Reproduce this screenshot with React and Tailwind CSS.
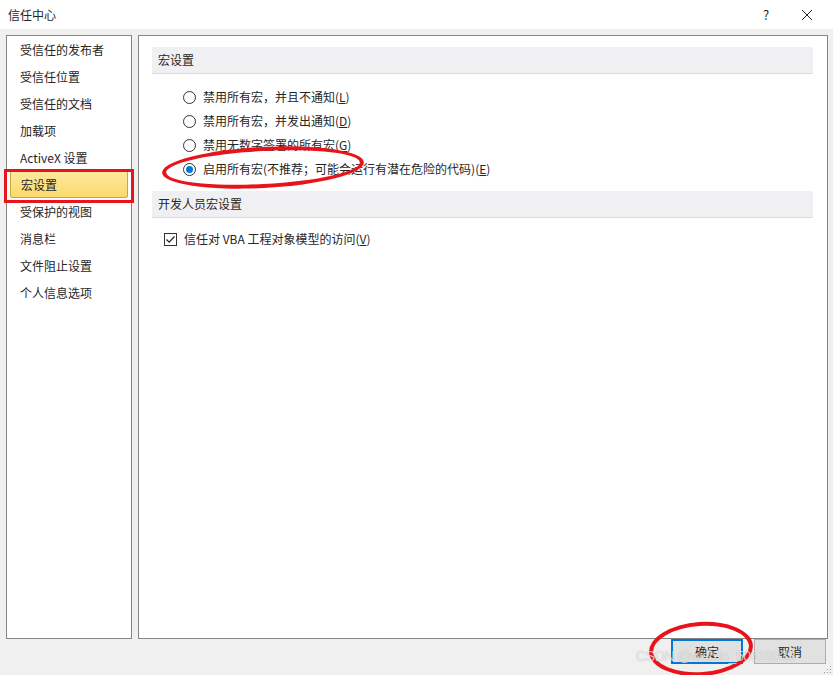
import { useState } from 'react'

const menu = [
  '受信任的发布者',
  '受信任位置',
  '受信任的文档',
  '加载项',
  'ActiveX 设置',
  '宏设置',
  '受保护的视图',
  '消息栏',
  '文件阻止设置',
  '个人信息选项',
]

const options = [
  { label: '禁用所有宏，并且不通知', key: 'L' },
  { label: '禁用所有宏，并发出通知', key: 'D' },
  { label: '禁用无数字签署的所有宏', key: 'G' },
  { label: '启用所有宏(不推荐；可能会运行有潜在危险的代码)', key: 'E' },
]

function Radio({ checked }) {
  return (
    <span className="w-[13px] h-[13px] rounded-full border border-[#333] bg-white flex items-center justify-center shrink-0">
      {checked && <span className="w-[7px] h-[7px] rounded-full bg-[#0078d7]" />}
    </span>
  )
}

function SectionHeader({ children }) {
  return (
    <div className="h-[27px] bg-[#f0f0f3] border-b border-[#dcdce0] flex items-center px-[6px] text-[12px] text-[#262626]">
      {children}
    </div>
  )
}

export default function App() {
  const [selected, setSelected] = useState(3)
  const [trustVba, setTrustVba] = useState(true)

  return (
    <div
      className="relative w-[833px] h-[675px] bg-[#f0f0f0] flex flex-col overflow-hidden text-[#262626]"
      style={{ fontFamily: '"Noto Sans CJK SC", "Noto Sans", sans-serif' }}
    >
      {/* title bar */}
      <div className="h-[29px] bg-white flex items-center pl-[8px] text-[12px]">
        <span>信任中心</span>
        <span className="ml-auto w-[30px] text-center text-[13px]">?</span>
        <span className="w-[52px] flex justify-center">
          <svg width="12" height="12" viewBox="0 0 12 12">
            <path d="M1 1 L11 11 M11 1 L1 11" stroke="#222" strokeWidth="1" />
          </svg>
        </span>
      </div>

      {/* body */}
      <div className="flex gap-[6px] pl-[6px] pt-[6px] h-[610px]">
        <div className="w-[126px] h-[604px] bg-white border border-[#858585]">
          {menu.map((m, i) => (
            <div key={m} className="h-[27px] px-[3px] flex items-center">
              <div
                className={`w-full h-[27px] flex items-center pl-[10px] text-[12px] ${
                  i === 5 ? 'bg-gradient-to-b from-[#fde99e] to-[#fbd96a] border border-[#c8a642] rounded-[2px]' : ''
                }`}
              >
                {m}
              </div>
            </div>
          ))}
        </div>

        <div className="w-[690px] h-[604px] bg-white border border-[#858585] pt-[11px] pl-[13px] pr-[14px]">
          <SectionHeader>宏设置</SectionHeader>
          <div className="pt-[11px] pl-[31px] flex flex-col">
            {options.map((o, i) => (
              <div
                key={o.key}
                onClick={() => setSelected(i)}
                className="h-[24px] flex items-center gap-[7px] text-[12px] cursor-pointer"
              >
                <Radio checked={selected === i} />
                <span>
                  {o.label}(<span className="underline">{o.key}</span>)
                </span>
              </div>
            ))}
          </div>
          <div className="mt-[10px]">
            <SectionHeader>开发人员宏设置</SectionHeader>
          </div>
          <div
            onClick={() => setTrustVba(!trustVba)}
            className="mt-[12px] pl-[12px] h-[18px] flex items-center gap-[7px] text-[12px] cursor-pointer"
          >
            <span className="w-[13px] h-[13px] border border-[#333] bg-white flex items-center justify-center">
              {trustVba && (
                <svg width="11" height="11" viewBox="0 0 11 11">
                  <path d="M1.5 5.5 L4.2 8.2 L9.5 2.5" stroke="#222" strokeWidth="1.2" fill="none" />
                </svg>
              )}
            </span>
            <span>
              信任对 VBA 工程对象模型的访问(<span className="underline">V</span>)
            </span>
          </div>
        </div>
      </div>

      {/* footer */}
      <div className="flex justify-end gap-[11px] pr-[7px]">
        <button className="w-[72px] h-[25px] bg-[#e1e1e1] border-2 border-[#0078d7] text-[12px]">确定</button>
        <button className="w-[72px] h-[25px] bg-[#e1e1e1] border border-[#adadad] text-[12px]">取消</button>
      </div>

      {/* resize grip */}
      <svg className="absolute right-[1px] bottom-[1px]" width="10" height="10" viewBox="0 0 10 10">
        <rect x="8" y="2" width="1" height="1" fill="#999" />
        <rect x="5" y="5" width="1" height="1" fill="#999" />
        <rect x="8" y="5" width="1" height="1" fill="#999" />
        <rect x="2" y="8" width="1" height="1" fill="#999" />
        <rect x="5" y="8" width="1" height="1" fill="#999" />
        <rect x="8" y="8" width="1" height="1" fill="#999" />
      </svg>

      {/* annotations */}
      <div className="absolute left-[4px] top-[169px] w-[130px] h-[34px] border-[3px] border-[#e8141c]" />
      <div className="absolute left-[162px] top-[147px] w-[202px] h-[41px] rounded-[50%] border-[4px] border-[#e8141c] rotate-[-3deg]" />
      <div className="absolute left-[649px] top-[622px] w-[104px] h-[54px] rounded-[50%] border-[4px] border-[#e8141c] rotate-[-4deg]" />

      {/* watermark */}
      <div className="absolute left-[636px] top-[646px] text-[14px] text-white/70 tracking-tight pointer-events-none" style={{ fontFamily: '"Liberation Sans", sans-serif', textShadow: '0 0 1px rgba(0,0,0,0.3)' }}>
        CSDN @weixin_50610933
      </div>
    </div>
  )
}
